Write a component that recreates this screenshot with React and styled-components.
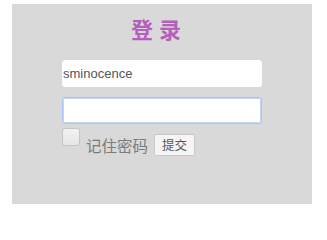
import React from "react";
import styled, { createGlobalStyle } from "styled-components";

const Global = createGlobalStyle`
  html, body { margin: 0; padding: 0; background: #fff; }
  body { font-family: "Liberation Sans", "Noto Sans CJK SC", sans-serif; }
`;

const Panel = styled.div`
  margin: 4px 0 0 12px;
  width: 300px;
  height: 200px;
  background: #d9d9d9;
  display: flex;
  flex-direction: column;
  align-items: center;
  box-sizing: border-box;
`;

const Title = styled.h1`
  margin: 9px 0 0 0;
  height: 30px;
  line-height: 30px;
  font-size: 22px;
  font-weight: bold;
  letter-spacing: 6px;
  color: #b55fbc;
  font-family: "Noto Sans CJK SC", sans-serif;
  padding-left: 0;
  transform: translateX(-3px);
`;

const Form = styled.form`
  margin-top: 17px;
  width: 200px;
  display: flex;
  flex-direction: column;
`;

const Input = styled.input`
  box-sizing: border-box;
  width: 200px;
  height: 27px;
  margin: 0 0 ${(p) => p.$gap}px 0;
  padding: 0;
  border: 1px solid ${(p) => (p.$focused ? "#a9c6f2" : "#fff")};
  ${(p) => p.$focused && "box-shadow: 0 0 0 1px #c4d7f5 inset;"}
  border-radius: 3px;
  background: #fff;
  font-family: "Liberation Sans", Arial, sans-serif;
  font-size: 13px;
  color: #555;
  outline: none;
`;

const Row = styled.div`
  display: flex;
  align-items: center;
  height: 26px;
`;

const Box = styled.span`
  box-sizing: border-box;
  width: 18px;
  height: 18px;
  border: 1px solid #c4c4c4;
  border-radius: 3px;
  background: linear-gradient(#f2f2f2, #e6e6e6);
  align-self: flex-start;
  margin-top: 0;
`;

const Label = styled.span`
  margin-left: 6px;
  font-size: 15.5px;
  color: #7b7b7b;
  font-family: "Noto Sans CJK SC", sans-serif;
  margin-top: 7px;
`;

const Button = styled.button`
  margin-left: 6px;
  margin-top: 7px;
  box-sizing: border-box;
  width: 41px;
  height: 22px;
  padding: 0;
  border: 1px solid #c8c8c8;
  border-radius: 2px;
  background: #f5f5f5;
  color: #555;
  font-size: 12.5px;
  font-family: "Noto Sans CJK SC", sans-serif;
`;

export default function App() {
  return (
    <>
      <Global />
      <Panel>
        <Title>登录</Title>
        <Form onSubmit={(e) => e.preventDefault()}>
          <Input $gap={10} defaultValue="sminocence" />
          <Input $gap={4} $focused />
          <Row>
            <Box />
            <Label>记住密码</Label>
            <Button type="submit">提交</Button>
          </Row>
        </Form>
      </Panel>
    </>
  );
}
